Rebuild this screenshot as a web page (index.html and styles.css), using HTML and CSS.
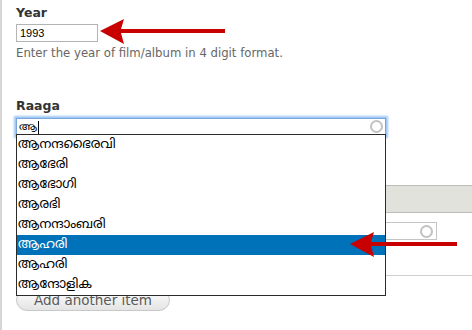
FILE: index.html
```html
<!DOCTYPE html>
<html lang="en">
<head>
  <meta charset="UTF-8" />
  <title>Song form</title>
  <link rel="stylesheet" href="styles.css">
</head>
<body>
  <div class="page">
    <div class="field year-field">
      <label class="field-label" for="year">Year</label>
      <input class="text-input year-input" type="text" id="year" value="1993" />
      <div class="description">Enter the year of film/album in 4 digit format.</div>
      <svg class="arrow arrow-year" width="130" height="26" viewBox="0 0 130 26">
        <polygon points="0,12 24,0 21,10 125,10 125,14 21,14 24,25" fill="#c80000"/>
      </svg>
    </div>

    <div class="field raaga-field">
      <label class="field-label" for="raaga">Raaga</label>
      <div class="autocomplete">
        <div class="text-input raaga-input focused"><span class="typed">ആ</span><span class="caret"></span></div>
        <span class="throbber"></span>
        <ul class="suggestions">
          <li>ആനന്ദഭൈരവി</li>
          <li>ആഭേരി</li>
          <li>ആഭോഗി</li>
          <li>ആരഭി</li>
          <li>ആനന്ദാംബരി</li>
          <li class="selected">ആഹരി</li>
          <li>ആഹരി</li>
          <li>ആന്ദോളിക</li>
        </ul>
      </div>

      <div class="multi-table">
        <div class="table-head"></div>
        <div class="table-row">
          <div class="text-input row-input"><span class="throbber small"></span></div>
        </div>
      </div>
      <button class="add-more" type="button">Add another item</button>

      <svg class="arrow arrow-raaga" width="110" height="26" viewBox="0 0 110 26">
        <polygon points="0,12 24,0 21,10 107,10 107,14 21,14 24,25" fill="#c80000"/>
      </svg>
    </div>
  </div>
</body>
</html>
```

FILE: styles.css
```css
* {
  margin: 0;
  padding: 0;
  box-sizing: border-box;
}
body {
  background-color: #ffffff;
  font-family: 'DejaVu Sans', Verdana, sans-serif;
  color: #333;
  overflow: hidden;
}
.page {
  border-left: 2px solid #d6d6d6;
  padding: 5px 0 0 14px;
  min-height: 330px;
}
.field {
  position: relative;
}
.field-label {
  display: block;
  font-size: 12.5px;
  font-weight: bold;
  line-height: 16px;
  color: #333;
  margin-bottom: 3px;
}
.text-input {
  display: block;
  height: 18px;
  border: 1px solid #b4b4b4;
  background: #fff;
  font-family: 'Liberation Sans', Arial, sans-serif;
  font-size: 11px;
  line-height: 16px;
  padding: 0 3px;
  color: #000;
}
.year-input {
  width: 82px;
}
.description {
  font-size: 11.7px;
  line-height: 16px;
  color: #666;
  margin-top: 3px;
}
.arrow {
  position: absolute;
}
.arrow-year {
  left: 84px;
  top: 14px;
}

.raaga-field {
  margin-top: 37px;
}
.raaga-field .field-label {
  margin-bottom: 4px;
}
.autocomplete {
  position: relative;
  width: 370px;
}
.raaga-input {
  width: 370px;
  border-color: #7aa7d9;
  box-shadow: 0 0 2px 2px #9cc6f5;
  display: flex;
  align-items: center;
  padding-left: 2px;
}
.typed {
  font-family: 'Noto Sans Malayalam', 'Noto Sans', sans-serif;
  font-size: 11px;
}
.caret {
  display: inline-block;
  width: 1px;
  height: 13px;
  background: #000;
  margin-left: 1px;
}
.throbber {
  position: absolute;
  right: 3px;
  top: 2px;
  width: 13px;
  height: 13px;
  border: 2px solid #c2c2c2;
  border-radius: 50%;
}
.suggestions {
  position: absolute;
  left: 0;
  top: 16px;
  width: 370px;
  list-style: none;
  background: #fff;
  border: 1px solid #2b2b2b;
  z-index: 5;
}
.suggestions li {
  height: 20px;
  line-height: 20px;
  padding-left: 1px;
  font-family: 'Noto Sans Malayalam', 'Noto Sans', sans-serif;
  font-size: 13px;
  color: #000;
  white-space: nowrap;
}
.suggestions li.selected {
  background: #0072b9;
  color: #fff;
}

.multi-table {
  margin-top: 49px;
  border-bottom: 1px solid #cfcfcf;
}
.table-head {
  height: 28px;
  background: #e1e2dc;
  border: 1px solid #bdbdb7;
  border-right: none;
}
.table-row {
  height: 62px;
  padding: 9px 0 0 0;
}
.row-input {
  position: relative;
  width: 421px;
  border-color: #c4c4c4;
}
.throbber.small {
  right: 3px;
  top: 2px;
}
.add-more {
  display: block;
  margin-top: 13px;
  width: 154px;
  height: 22px;
  border: 1px solid #c8c8c8;
  border-radius: 11px;
  background: linear-gradient(#fdfdfd, #e4e4e4);
  font-family: 'DejaVu Sans', Verdana, sans-serif;
  font-size: 13.5px;
  color: #5a5a5a;
  line-height: 18px;
}
.arrow-raaga {
  left: 334px;
  top: 134px;
  z-index: 6;
}
```
